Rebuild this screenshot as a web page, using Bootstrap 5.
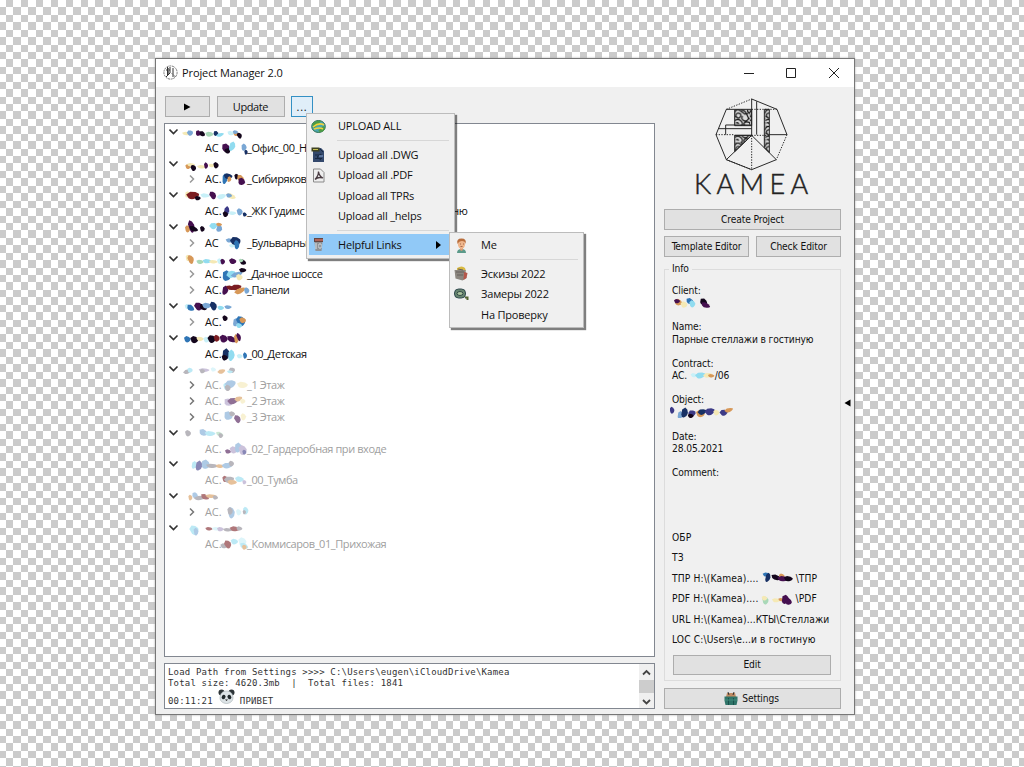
<!DOCTYPE html>
<html lang="en">
<head>
<meta charset="utf-8">
<title>Project Manager 2.0</title>
<link href="https://cdn.jsdelivr.net/npm/bootstrap@5.3.0/dist/css/bootstrap.min.css" rel="stylesheet">
<style>
html,body{height:767px;overflow:hidden}
body{font-family:"Open Sans","Noto Sans",sans-serif;font-size:11px;line-height:16px;color:#111;letter-spacing:-.2px;
background:linear-gradient(#cbcbcb,#cbcbcb),repeating-linear-gradient(180deg,#000 -.1px 7.335px,#fff 7.335px 14.77px),repeating-linear-gradient(90deg,#fff -1.45px 6px,#000 6px 13.45px);background-blend-mode:lighten,difference,normal;padding:58px 0 0 155px}
.tah{font-family:"DejaVu Sans Condensed","DejaVu Sans",sans-serif;font-size:10.2px;letter-spacing:-.13px}
.win{width:700px;height:657px;background:#f0f0f0;border:1px solid #777;box-shadow:0 0 2px #aaa}
.tbar{height:28px;background:#fff;padding:0 0 1px 7px}
.tbar .name{width:551px;padding-left:4px;letter-spacing:-.1px}
.wbtn{background:#e1e1e1;border:1px solid #adadad;height:21px;display:flex;align-items:center;justify-content:center;color:#111;padding:0}
.left{width:491px;margin-left:8px}
.tools{height:36px;padding:9px 0 0 1px;gap:6.5px}
.pane{background:#fff;border:1px solid #828790}
.tree{height:534px;padding:0 0 0 4px}
.trow{height:15.83px;line-height:15.83px;white-space:pre;letter-spacing:-.42px}
.tw{width:12px;margin-right:6px}
.pre{width:42px;letter-spacing:-.1px}
.smear{position:absolute;left:11px;top:0}
.dim{color:#a0a0a0}
.dim .smear{opacity:.6}
.log{height:46px;margin-top:6px;font-family:"DejaVu Sans Mono",monospace;font-size:9px;line-height:11px;letter-spacing:.18px;color:#333}
.right{width:177px;margin-left:9px}
.gbox{border:1px solid #dcdcdc;height:412px;margin-top:12px;padding:15px 7px 0 7px;white-space:pre}
.gbox .legend-text{position:absolute;top:-8px;left:4px;background:#f0f0f0;padding:0 3px;line-height:14px}
.fld{height:36.4px;line-height:12.2px}
.lnk{height:20.45px;line-height:20.45px;letter-spacing:.12px}
.menu-pop{position:absolute;background:#f0f0f0;border:1px solid #bcbcbc;box-shadow:2px 2px 1px rgba(0,0,0,.5);padding:3px 2px}
.mi{height:20.6px;display:flex;align-items:center;white-space:pre}
.mi .ic{width:17px;height:17px;margin:0 11px 0 1px;flex:none}
.mi.on{background:#91c9f7}
.sepr{height:1px;background:#d7d7d7;margin:3.2px 3px 3.5px 28px}
</style>
</head>
<body>
<div class="win position-relative">
  <div class="tbar d-flex align-items-center">
    <svg width="15" height="15" viewBox="0 0 15 15" fill="none" stroke="#777"><circle cx="7.5" cy="7.5" r="6.6" stroke-dasharray="2 .7"/><path d="M3 5h4M4.5 2v9M7 2v6L3 12M10 3v9" stroke="#333"/><path d="M5.5 3v6M8.5 8l4 4"/></svg>
    <div class="name">Project Manager 2.0</div>
    <svg width="110" height="14" viewBox="0 0 110 14" fill="none" stroke="#222"><path d="M15 7.500h10M57.500 2.500h9v9h-9zM100 2l10 10M110 2l-10 10"/></svg>
  </div>
  <div class="d-flex">
    <div class="left">
      <div class="tools d-flex">
        <button class="wbtn" style="width:45px"><svg width="7" height="8"><path d="M0 .5L6.500 4L0 7.500z"/></svg></button>
        <button class="wbtn" style="width:68px;letter-spacing:-.4px">Update</button>
        <button class="wbtn" style="width:22px;background:#e0eef9;border-color:#3490c4;letter-spacing:.8px">...</button>
      </div>
      <div class="pane tree" id="tree"></div>
      <div class="pane log d-flex justify-content-between">
        <div style="padding:3px 0 0 3px;white-space:pre"><div>Load Path from Settings &gt;&gt;&gt;&gt; C:\Users\eugen\iCloudDrive\Kamea</div><div>Total size: 4620.3mb  |  Total files: 1841</div><div class="d-flex align-items-end"><span style="margin-right:5px;margin-bottom:-2px">00:11:21</span><svg width="17" height="16" viewBox="0 0 17 16"><circle cx="3.500" cy="3.500" r="3" fill="#2d3437"/><circle cx="13.500" cy="3.500" r="3" fill="#2d3437"/><path d="M8.500 2C13 2 15 5 15 9c0 3-3 5.500-6.500 5.500S2 12 2 9c0-4 2-7 6.500-7z" fill="#dce3e6" stroke="#9aa4a8" stroke-width=".5"/><ellipse cx="5.600" cy="8" rx="1.800" ry="2.300" transform="rotate(30 5.600 8)" fill="#20282b"/><ellipse cx="11.400" cy="8" rx="1.800" ry="2.300" transform="rotate(-30 11.400 8)" fill="#20282b"/><path d="M7 10.500h3L8.500 12z" fill="#222"/></svg><span style="margin-left:5px;margin-bottom:-2px">ПРИВЕТ</span></div></div>
        <div style="width:15px;background:#f0f0f0"><svg width="15" height="44" fill="none" stroke="#444" stroke-width="1.800"><path d="M0 16h15v13H0z" fill="#cdcdcd" stroke="none"/><path d="M4 10.500l3.500-3.500L11 10.500M4 36l3.500 3.500L11 36"/></svg></div>
      </div>
    </div>
    <div class="right tah">
      <svg class="d-block" width="177" height="122" viewBox="0 0 177 122" fill="none" stroke="#222">
        <defs><pattern id="orn" width="46" height="50" patternUnits="userSpaceOnUse" x="239" y="148"><path d="M0 0h46v50H0z" fill="#ddd"/><path d="M-2 12Q5-4 16 4T30 14T48 8M2 24Q4 8 14 12T14 26Q6 28 5 20M20 2Q32 4 36 14T44 30M0 34q12-8 20 2T18 50M24 20q-6 10 4 14t14-8M30 50q-5-12 6-12t10 8M4 42q5-5 8 2M40 0q-4 8 6 12" fill="none" stroke="#111" stroke-width="3.600"/></pattern></defs>
        <g transform="translate(-9,-27) scale(.33333)" stroke-width="2.900">
          <path fill="url(#orn)" d="M239 148h51v49h-51zM239 226h51l-51 49zM328 148h15v130l-15-15z"/>
          <path d="M290 117L366 148L396 224M364 299L290 329L214 299L183 224L214 148H239M290 117V226L214 299M290 226L364 299M305 124V224M343 224H396M191 206H290M212 224V195H290M239 226H290"/>
          <path stroke-dasharray="4 4" d="M214 148L290 117M396 224L364 299M290 226V329M183 224H239M290 226H343M290 148H366M214 299L290 329"/>
        </g>
        <text x="30" y="107" textLength="114" lengthAdjust="spacing" style="font:300 27px Lato,sans-serif" fill="#222" stroke="#222" stroke-width=".45">KAMEA</text>
      </svg>
      <button class="wbtn w-100 tah">Create Project</button>
      <div class="d-flex justify-content-between" style="margin-top:6px"><button class="wbtn tah" style="width:85px">Template Editor</button><button class="wbtn tah" style="width:85px">Check Editor</button></div>
      <div class="gbox position-relative"><span class="legend-text">Info</span><div class="fld">Client:
<svg class="d-block" width="64" height="12" viewBox="-4 -18 192 36" style="margin-left:-1px"><g id="s1"></g></svg></div><div class="fld">Name:
Парные стеллажи в гостиную</div><div class="fld">Contract:
AC. <svg width="25" height="9" viewBox="0 -12 78 27"><g id="s2"></g></svg>/06</div><div class="fld">Object:
<svg class="d-block" width="64" height="12" viewBox="0 -18 192 36" style="margin-left:-2px"><g id="s3"></g></svg></div><div class="fld">Date:
28.05.2021</div><div class="fld" style="height:61px">Comment:</div><div class="lnk">ОБР</div><div class="lnk">ТЗ</div><div class="lnk">ТПР H:\(Kamea).... <svg width="31" height="13" viewBox="0 -20 99 40"><g id="s4"></g></svg> \ТПР</div><div class="lnk">PDF H:\(Kamea).... <svg width="31" height="13" viewBox="0 -20 99 40"><g id="s5"></g></svg> \PDF</div><div class="lnk">URL H:\(Kamea)...КТЫ\Стеллажи</div><div class="lnk">LOC C:\Users\e...и в гостиную</div><button class="wbtn tah" style="width:158px;margin:4px 0 0 1px;height:20px">Edit</button></div>
      <button class="wbtn w-100 tah" style="margin-top:7px;padding-right:2px"><svg width="14" height="14" viewBox="0 0 14 14" style="margin-right:4px"><path d="M3 1h8l1 4H2z" fill="#c08b63"/><path d="M4 0l1 3M10 0L9 3" stroke="#333"/><path d="M.5 4.500h13v4L12.500 13h-11L.5 8.500z" fill="#2f7468"/><path d="M4.500 6v7M9.500 6v7" stroke="#194d49" stroke-width=".9"/><path d="M1 8h12" stroke="#438a7a"/></svg>Settings</button>
    </div>
    <svg width="7" height="8" style="margin:312px 0 0 3px"><path d="M6.500.5v7L.5 4z"/></svg>
  </div>

  <div class="menu-pop" style="left:150px;top:54px;width:149px;height:146px;padding-top:2px">
    <div class="mi"><svg class="ic" viewBox="0 0 17 17"><ellipse cx="8.500" cy="8.500" rx="6.800" ry="6" fill="#4aa7b0" stroke="#2f6e50"/><path d="M2 6q4-4 9-3l-3 4-4 3zM8 13l5-5 2 1q0 5-5 5z" fill="#4d9c46"/><path d="M3 9q6-5 11-2M4 11q6-2 9 0" stroke="#f0d23c" stroke-width="1.600" fill="none"/></svg>UPLOAD ALL</div>
    <div class="sepr"></div>
    <div class="mi"><svg class="ic" viewBox="0 0 17 17"><path d="M3 2h8l3 3v11H3z" fill="#34496d"/><path d="M1.500 1.500h8v4h-8z" fill="#3f4322"/><path d="M3 3.500h5" stroke="#c6c057"/><path d="M10 3l3 3M5 9h7M5 12.500h7M11 8l-4 3 4 3" stroke="#172842" fill="none"/><path d="M9 10h4" stroke="#88a6d6"/></svg>Upload all .DWG</div>
    <div class="mi"><svg class="ic" viewBox="0 0 17 17"><path d="M3.500 2h7L14 5.500V15H3.500z" fill="#eee" stroke="#8a8a8a"/><path d="M5 12.500Q8.500 9 8.500 4.500Q9 9 13 11Q8 9.500 5 12.500z" fill="none" stroke="#493b42" stroke-width="1.300"/></svg>Upload all .PDF</div>
    <div class="mi"><span class="ic"></span>Upload all TPRs</div>
    <div class="mi"><span class="ic"></span>Upload all _helps</div>
    <div class="sepr"></div>
    <div class="mi on"><svg class="ic" viewBox="0 0 17 17"><path d="M4.500 6h8l-1 9h-6z" fill="#8f9296"/><path d="M4 2h9v4H4z" fill="#664641"/><path d="M5 4h8" stroke="#cf7263" stroke-width="1.400"/><path d="M6 7v6M9 8h2v4H9z" stroke="#dce2e6" fill="#424c59"/></svg><span style="width:98px">Helpful Links</span><svg width="6" height="8"><path d="M0 0l5 4-5 4z"/></svg></div>
  </div>
  <div class="menu-pop" style="left:293px;top:173px;width:135px;height:96px;padding-top:2px">
    <div class="mi"><svg class="ic" viewBox="0 0 17 17"><path d="M4 16q0-4 4.500-4t4.500 4z" fill="#5c9a8a"/><path d="M7 10h3v3l-1.500 1L7 13z" fill="#d99b74"/><ellipse cx="8.500" cy="7" rx="3.600" ry="5" fill="#efb68c"/><path d="M4.500 7Q3 1.500 8.500 1.500T12.500 7Q12 4 9 4T4.500 7z" fill="#b96e3c"/><path d="M7 7h1M10 7h1M7.500 9.500h2" stroke="#96563e" stroke-width=".8"/></svg>Me</div>
    <div class="sepr"></div>
    <div class="mi"><svg class="ic" viewBox="0 0 17 17"><path d="M4 3q5-3 8 0l1 3H4z" fill="#d8b942"/><path d="M1.500 5h11l1 8-4 2.500-7-2z" fill="#8c8780"/><path d="M11 7l3.500 1-1 5-3 2z" fill="#b5564a"/><path d="M3 7h8M4 10h6M5 4l5 1" stroke="#66605c"/></svg>Эскизы 2022</div>
    <div class="mi"><svg class="ic" viewBox="0 0 17 17"><rect x="1.500" y="3" width="11" height="9" rx="4" fill="#66856f" stroke="#324b50"/><path d="M12 11.500h2.500V14" stroke="#536432" stroke-width="2" fill="none"/><ellipse cx="7" cy="7.500" rx="3" ry="2" fill="#abc39e" stroke="#344b46"/></svg>Замеры 2022</div>
    <div class="mi"><span class="ic"></span>На Проверку</div>
  </div>
</div>

<script>
// Marker strokes that hide private names. Each dab: x, y, rx, ry, angle, colour.
const C={k:'#14061c',p:'#45104f',b:'#2f75b5',n:'#173064',c:'#91dcf0',l:'#c8f0f8',y:'#f5e9b5',o:'#d79858',r:'#7b1d22',g:'#a9d8b8',s:'#7aa7d4',m:'#a99bc4',e:'#8a8690',u:'#3c3a86'};
const dabs=t=>t?t.split(';').map(d=>{const[x,y,a,b,r,c]=d.trim().split(/\s+/);
  const X=+x,Y=+y,A=+a,B=+b;
  return `<path transform="translate(${X} ${Y}) rotate(${r})" fill="${C[c]}" d="M${-A} ${-B*.4}L${-A*.3} ${-B}L${A*.5} ${-B*.7}L${A} ${-B*.1}Q${A*1.1} ${B*.6} ${A*.4} ${B}T${-A*.7} ${B*.7}Z"/>`}).join(''):'';
const rows=[
 [0,'','80 4 14 5 0 y;90 2 9 8 -20 s;115 3 8 8 20 p;127 5 9 7 30 k;148 6 12 7 0 g;168 4 8 7 30 n;180 8 12 5 -20 c;212 3 10 6 10 l;228 5 8 6 0 o;238 10 7 9 -20 k;226 0 8 5 0 s'],
 [1,'','198 -2 13 11 20 p;202 8 9 8 -40 k;217 -6 9 14 25 c;252 -3 8 10 10 s;258 12 5 7 0 n','_Офис_00_Н','AC'],
 [0,'','84 7 8 7 0 o;93 2 12 5 0 y;100 11 8 9 -15 k;125 8 14 5 0 y;138 4 6 9 0 p;155 4 10 5 0 y;168 3 8 9 0 k'],
 [1,1,'195 -2 8 15 10 b;204 -9 13 8 0 n;208 0 6 8 20 o;230 -8 7 8 0 k;242 -3 12 8 30 o;245 7 11 10 20 p','_Сибиряковс'],
 [0,'','83 -2 8 9 20 y;98 0 19 11 -8 r;113 9 9 6 0 k;135 1 14 6 0 l;158 0 9 12 -25 p;184 4 14 7 -20 l;213 3 15 7 20 y;207 1 9 6 0 s'],
 [1,'','200 0 8 15 15 u;196 9 8 8 0 k;217 6 12 5 0 l;239 2 9 10 0 s;254 10 6 6 0 n','_ЖК Гудимс'],
 [0,'','83 5 8 10 0 o;94 -3 9 18 -12 p;101 5 14 7 20 k;127 5 7 8 0 k;160 -4 12 9 -20 c;178 4 9 10 30 s;177 -8 9 5 0 o'],
 [1,1,'210 -8 13 6 0 s;226 -6 15 14 -15 n;230 4 8 13 0 b;216 8 9 5 0 l','_Бульварный','AC'],
 [0,'','83 -4 6 9 0 y;92 0 9 13 -15 o;120 8 11 6 0 g;141 6 13 6 0 c;160 8 13 5 0 y;180 6 9 8 0 l;188 7 7 8 0 p;218 6 11 8 0 p;249 9 10 7 20 k;243 4 7 5 0 g'],
 [1,1,'200 4 13 15 15 b;213 0 14 10 -30 c;230 1 18 7 -20 s;248 -12 11 6 0 k;238 9 10 9 0 y','_Дачное шоссе'],
 [1,1,'196 0 9 13 20 p;212 -7 14 6 10 r;228 -9 16 8 -10 r;239 2 17 8 -30 o;260 1 8 9 0 s','_Панели'],
 [0,'','82 1 8 7 0 l;92 5 12 8 30 b;115 0 12 12 -20 p;130 3 12 8 30 k;140 -2 14 8 0 s;160 -1 10 13 -15 n;182 5 10 6 0 c;204 3 11 5 0 s'],
 [1,1,'195 -12 8 8 0 k;228 0 9 12 20 s;242 -4 13 15 -15 b;248 -6 10 8 0 o;237 10 9 7 0 c',''],
 [0,'','82 3 10 9 0 b;103 4 12 10 0 k;120 2 11 6 0 y;140 4 10 8 0 l;155 2 12 11 -10 k;170 0 9 10 0 r;191 1 12 11 0 p;215 3 15 8 20 p;229 1 7 13 0 o;236 -4 6 12 -15 p'],
 [1,'','198 0 11 17 15 n;194 10 9 8 0 k;214 3 10 16 10 c;239 6 9 6 0 l;255 4 6 9 0 b','_00_Детская'],
 [0,'','82 7 13 6 -25 e;90 3 8 7 0 c;132 3 16 5 0 m;127 6 8 6 0 e;160 1 8 6 0 l;184 7 12 6 -20 o;216 3 9 8 -20 e;210 8 9 4 0 c',,,1],
 [1,1,'198 3 8 10 0 c;211 -4 16 11 -20 s;203 8 9 9 0 e;247 -1 16 9 0 y','_1 Этаж',,1],
 [1,1,'205 3 13 10 20 m;218 -1 16 9 -15 p;235 -7 12 7 -20 o;248 0 8 7 0 y','_2 Этаж',,1],
 [1,1,'205 -5 13 12 20 s;216 -10 9 7 0 e;232 5 9 12 -20 p;250 -1 8 10 0 y','_3 Этаж',,1],
 [0,'','84 0 9 9 0 e;130 -2 13 9 20 s;150 1 16 7 0 c;179 3 12 6 20 g;182 7 7 7 0 e',,,1],
 [1,'','204 7 9 6 0 p;221 2 12 10 0 m;235 -5 11 14 15 s;248 2 12 14 0 m;253 9 6 7 0 u','_02_Гардеробная при входе',,1],
 [0,'','103 2 8 11 20 c;117 4 10 14 20 u;137 0 13 13 20 s;156 5 18 6 0 e;180 6 13 5 0 o;202 4 17 8 -10 s;214 -2 8 8 0 e',,,1],
 [1,'','195 -4 8 9 0 r;207 -2 15 9 -15 e;216 6 14 7 0 o;238 -3 13 8 0 c;253 6 6 6 0 m','_00_Тумба',,1],
 [0,'','91 4 6 8 0 o;105 -3 9 8 20 s;120 5 19 6 -10 e;135 2 13 7 20 r;153 0 17 5 0 o;166 4 8 6 0 e',,,1],
 [1,1,'214 1 10 16 0 s;210 -4 8 11 0 e;236 0 8 9 0 l;257 -5 8 11 0 c;253 0 5 6 0 e','',,1],
 [0,'','102 5 13 14 -15 c;108 10 7 11 0 s;147 2 11 5 0 r;170 2 15 5 0 l;181 3 10 6 0 m;203 5 14 5 0 e;224 2 15 7 0 r;238 1 9 6 0 e',,,1],
 [1,'','192 5 11 7 0 e;203 0 10 12 -20 r;223 -8 11 8 0 c;247 -8 12 12 0 l;252 5 13 8 20 c;253 9 7 7 0 o','_Коммисаров_01_Прихожая',,1]
];
document.getElementById('tree').innerHTML=rows.map(([lv,ar,sm,tx,pre,dim],i)=>{
 const svg=`<svg class="smear" width="80" height="16" viewBox="60 -24 240 48">${dabs(sm)}</svg>`;
 const down='<svg class="tw" height="12" viewBox="0 0 12 12" fill="none" stroke="#333" stroke-width="1.600"><path d="M.5 3.500L4.500 7.500L8.500 3.500"/></svg>';
 const rt=`<svg class="tw" height="12" viewBox="0 0 12 12" fill="none" stroke="${dim?'#777':'#999'}" stroke-width="1.500"><path d="M3 2.500L6.500 6L3 9.500"/></svg>`;
 return `<div class="trow d-flex align-items-center position-relative ${dim?'dim':''}">`+(lv?`<span style="width:18px"></span>${ar?rt:'<span class="tw"></span>'}<span class="pre">${pre||'AC.'}</span><span>${tx}</span>${i==5?'<span style="margin-left:148px">ню</span>':''}`:down)+svg+'</div>';
}).join('');
const extra={
 s1:'18 -3 12 9 15 o;14 -6 9 6 0 p;35 4 10 9 0 y;53 -6 12 8 20 b;60 2 9 10 0 c;94 -4 12 9 30 k;100 6 14 7 20 p',
 s2:'12 0 10 6 0 l;32 0 16 9 -15 c;55 0 14 7 -15 y;66 2 10 5 0 o',
 s3:'6 -6 7 10 0 u;31 8 8 11 20 s;44 1 10 14 20 n;66 3 11 9 -20 u;62 11 9 6 0 k;91 4 13 10 0 o;96 -1 13 8 -20 n;119 -2 15 10 -20 u;139 1 9 8 0 y;161 1 12 9 -20 u;176 -6 13 6 -20 o',
 s4:'14 -13 12 6 0 b;19 -4 8 14 20 n;45 -4 16 8 15 k;63 -8 9 8 0 o;67 0 18 8 0 p;84 0 14 8 0 k',
 s5:'14 2 10 12 0 g;11 -5 9 7 0 y;48 2 13 6 0 y;65 0 10 5 0 o;78 -1 12 14 20 p;88 6 11 10 20 p'};
for(const k in extra)document.getElementById(k).innerHTML=dabs(extra[k]);
</script>
<script src="https://cdn.jsdelivr.net/npm/bootstrap@5.3.0/dist/js/bootstrap.bundle.min.js"></script>
</body>
</html>
